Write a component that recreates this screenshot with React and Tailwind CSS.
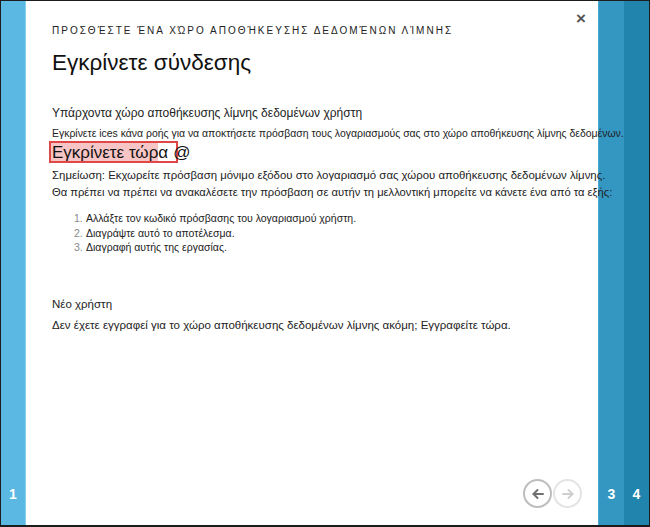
import React from "react";

function NavButton({ dir, disabled }) {
  return (
    <button
      className={`w-[29px] h-[29px] rounded-full border-2 flex items-center justify-center ${
        disabled ? "border-[#e4e4e4] text-[#cfcfcf]" : "border-[#bdbdbd] text-[#707070]"
      }`}
    >
      <svg width="14" height="14" viewBox="0 0 14 14" fill="none" stroke="currentColor" strokeWidth="2" strokeLinecap="round" strokeLinejoin="round">
        {dir === "left" ? (
          <>
            <path d="M12 7H2.5" />
            <path d="M6.5 3L2.5 7l4 4" />
          </>
        ) : (
          <>
            <path d="M2 7h9.5" />
            <path d="M7.5 3l4 4-4 4" />
          </>
        )}
      </svg>
    </button>
  );
}

const steps = [
  "Αλλάξτε τον κωδικό πρόσβασης του λογαριασμού χρήστη.",
  "Διαγράψτε αυτό το αποτέλεσμα.",
  "Διαγραφή αυτής της εργασίας.",
];

export default function App() {
  return (
    <div
      className="w-[650px] h-[527px] bg-[#1c1c1c] pt-px pl-px pr-px pb-[2px]"
      style={{ fontFamily: '"Liberation Sans", Arial, sans-serif' }}
    >
      <div className="flex h-full">
        {/* step 1 strip */}
        <div className="w-[25px] shrink-0 bg-[#5ab8e3] border-r border-[#86d3f3] flex flex-col justify-end items-center pb-[24px]">
          <span className="text-white font-bold text-[14px] leading-none">1</span>
        </div>

        {/* main panel */}
        <div className="relative z-10 w-[572px] shrink-0 bg-white flex flex-col pl-[26px] pr-[12px] pt-[24px] text-[#222] whitespace-nowrap">
          <button className="absolute right-[12px] top-[9px] text-[#555] text-[17px] font-bold leading-none">
            ×
          </button>

          <div className="text-[10px] leading-[12px] text-[#222] tracking-[2px]">
            ΠΡΟΣΘΈΣΤΕ ΈΝΑ ΧΏΡΟ ΑΠΟΘΉΚΕΥΣΗΣ ΔΕΔΟΜΈΝΩΝ ΛΊΜΝΗΣ
          </div>
          <h1 className="mt-[12px] text-[22.5px] leading-[28px] text-[#111]">Εγκρίνετε σύνδεσης</h1>

          <div className="mt-[29px] text-[12px] leading-[15px]">
            Υπάρχοντα χώρο αποθήκευσης λίμνης δεδομένων χρήστη
          </div>
          <div className="mt-[6px] text-[10.45px] leading-[13px]">
            Εγκρίνετε ices κάνα ροής για να αποκτήσετε πρόσβαση τους λογαριασμούς σας στο χώρο αποθήκευσης λίμνης δεδομένων.
          </div>

          <div className="mt-[1px] flex items-center -ml-[3px]">
            <span className="border-2 border-[#e04848] pl-[1px] pr-[8px] h-[22px] flex items-center bg-[linear-gradient(to_right,#f7c5c5_0,#f7c5c5_86%,#ffffff_86%)]">
              <span className="text-[17px] leading-none text-[#111]">Εγκρίνετε τώρα</span>
            </span>
            <span className="text-[17px] leading-none text-[#111] -ml-[5px]">@</span>
          </div>

          <div className="mt-[4px] leading-[17px]">
            <div className="text-[11.4px]">Σημείωση: Εκχωρείτε πρόσβαση μόνιμο εξόδου στο λογαριασμό σας χώρου αποθήκευσης δεδομένων λίμνης.</div>
            <div className="text-[11.2px]">Θα πρέπει να πρέπει να ανακαλέσετε την πρόσβαση σε αυτήν τη μελλοντική μπορείτε να κάνετε ένα από τα εξής:</div>
          </div>

          <ol className="mt-[10px] ml-[22px] text-[10.5px] leading-[14.5px]">
            {steps.map((s, i) => (
              <li key={i} className="flex">
                <span className="w-[12px] text-[#888]">{i + 1}.</span>
                <span>{s}</span>
              </li>
            ))}
          </ol>

          <div className="mt-[42px] text-[11.5px] leading-[14px]">Νέο χρήστη</div>
          <div className="mt-[7px] text-[11.5px] leading-[14px]">
            Δεν έχετε εγγραφεί για το χώρο αποθήκευσης δεδομένων λίμνης ακόμη; Εγγραφείτε τώρα.
          </div>

          <div className="mt-auto mb-[17px] mr-[4px] flex justify-end gap-[1px]">
            <NavButton dir="left" />
            <NavButton dir="right" disabled />
          </div>
        </div>

        {/* steps 3 and 4 */}
        <div className="w-[26px] shrink-0 bg-[#3397c2] border-l border-[#4aa8d2] flex flex-col justify-end items-center pb-[24px]">
          <span className="text-white font-bold text-[14px] leading-none">3</span>
        </div>
        <div className="w-[25px] shrink-0 bg-[#2084ad] flex flex-col justify-end items-center pb-[24px]">
          <span className="text-white font-bold text-[14px] leading-none">4</span>
        </div>
      </div>
    </div>
  );
}
